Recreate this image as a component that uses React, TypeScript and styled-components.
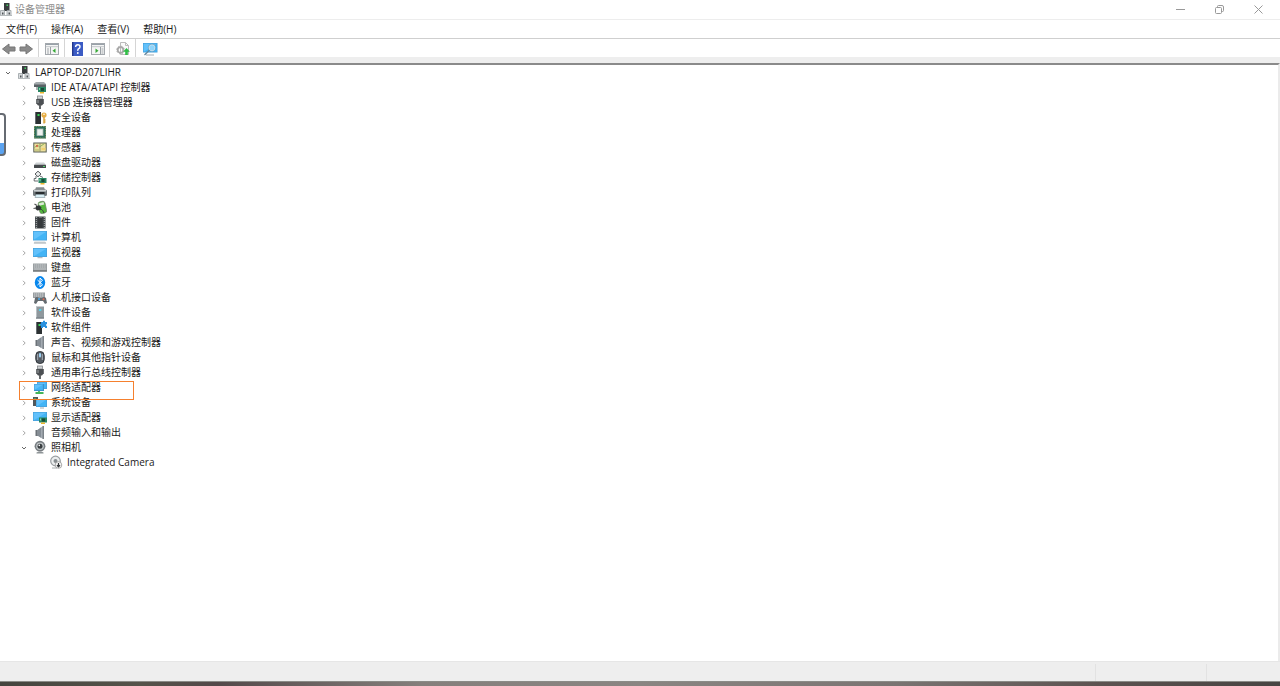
import React, { useState } from "react";
import styled, { createGlobalStyle, css } from "styled-components";

const GlobalStyle = createGlobalStyle`
  *, *::before, *::after { box-sizing: border-box; }
  body {
    margin: 0;
    background: #fff;
    color: #1a1a1a;
    font-family: "Open Sans", "Noto Sans CJK SC", sans-serif;
    font-size: 10px;
    line-height: 15px;
  }
  button { font: inherit; color: inherit; background: none; border: 0; padding: 0; margin: 0; }
`;

const Window = styled.div`
  position: relative;
  display: flex;
  flex-direction: column;
  min-height: 100vh;
  overflow: hidden;
`;

const TitleBar = styled.header`
  display: flex;
  align-items: center;
  height: 20px;
  border-bottom: 1px solid #ededed;
`;

const Title = styled.h1`
  flex: 1;
  margin: 0 0 0 3px;
  font-size: 10px;
  font-weight: 400;
  color: #8c8c8c;
`;

const Caption = styled.button`
  display: flex;
  align-items: center;
  justify-content: center;
  width: 39px;
  height: 19px;
  color: #999;
`;

const CaptionGroup = styled.div`
  display: flex;
  padding-right: 2px;
`;

const MenuBar = styled.nav`
  display: flex;
  align-items: center;
  gap: 14px;
  height: 19px;
  padding: 1px 0 0 6px;
  border-bottom: 1px solid #cfcfcf;
`;

const MenuItem = styled.button`
  height: 15px;
  white-space: nowrap;
`;

const ToolBar = styled.div`
  display: flex;
  align-items: center;
  height: 24px;
  border-bottom: 6px solid #eee;
`;

const ToolButton = styled.button<{ $width?: number }>`
  display: flex;
  align-items: center;
  justify-content: center;
  width: ${(p) => p.$width ?? 21}px;
  height: 18px;
  padding-top: 2px;
`;

const Divider = styled.span`
  width: 1px;
  height: 18px;
  margin: 0 2px;
  background: #d5d5d5;
`;

const TreePane = styled.main`
  flex: 1;
  border-top: 2px solid #8a8a8a;
  border-right: 2px solid #ebebeb;
`;

const List = styled.ul`
  list-style: none;
  margin: 0;
  padding: 0;
`;

const Row = styled.div<{ $depth: number }>`
  position: relative;
  display: flex;
  align-items: center;
  width: max-content;
  height: 15px;
  padding-left: ${(p) => p.$depth * 16}px;
`;

const Toggle = styled.button`
  display: flex;
  align-items: center;
  justify-content: center;
  width: 16px;
  height: 15px;
`;

const Spacer = styled.span`
  width: 16px;
`;

const IconSlot = styled.span`
  display: flex;
  margin: 0 4px 0 1px;
`;

const Label = styled.span`
  white-space: nowrap;
`;

const Mark = styled.span`
  position: absolute;
  z-index: 1;
  top: 1px;
  left: 19px;
  width: 115px;
  height: 19px;
  border: 1px solid #f5802e;
  pointer-events: none;
`;

const EdgeHandle = styled.span`
  position: absolute;
  top: 113px;
  left: -6px;
  width: 12px;
  height: 43px;
  border: 2px solid #666b72;
  border-radius: 4px;
  background: linear-gradient(#fff 0 28px, #5ba3f0 28px);
`;

const StatusBar = styled.footer`
  display: flex;
  height: 20px;
  border-top: 1px solid #e6e6e6;
  background: #eee;
`;

const StatusCell = styled.span<{ $size?: number }>`
  ${(p) =>
    p.$size
      ? css`flex: 0 0 ${p.$size}px; margin-top: 2px; border-left: 1px solid #e2e2e2;`
      : css`flex: 1;`}
`;

const DesktopEdge = styled.div`
  height: 5px;
  border-top: 1px solid #8b8b87;
  background: linear-gradient(90deg, #45443e 0%, #55534a 11%, #54494a 17%, #857f7c 33%, #8a8582 50%, #7a7472 70%, #5c5250 86%, #474442 100%);
`;

/* ---------- drawings ---------- */

const Screen = ({ x, y, w, h }: { x: number; y: number; w: number; h: number }) => (
  <>
    <rect x={x} y={y} width={w} height={h} fill="#4b9fd8" />
    <rect x={x + 0.7} y={y + 0.7} width={w - 1.4} height={h - 1.4} fill="#43b4f5" />
    <path d={`M${x + 0.7} ${y + h - 0.7}L${x + w - 0.7} ${y + 0.7}H${x + 0.7}z`} fill="#62c1fb" />
  </>
);

const Card = ({ x, y }: { x: number; y: number }) => (
  <>
    <rect x={x} y={y} width="8" height="5" fill="#298662" />
    <rect x={x + 3} y={y + 1} width="3" height="3" fill="#174b38" />
    <rect x={x + 1} y={y + 1} width="1" height="2" fill="#8ad2b0" />
    <rect x={x + 2} y={y + 5} width="4" height="1.5" fill="#edb72e" />
  </>
);

const Tower = ({ x, y, h }: { x: number; y: number; h: number }) => (
  <>
    <rect x={x} y={y} width="6" height={h} fill="#2c3133" />
    <rect x={x} y={y} width="1" height={h} fill="#666d70" />
    <rect x={x + 2.5} y={y + 2} width="2" height="2" fill="#37d957" />
  </>
);

const speaker = (
  <>
    <path d="M2.5 5H5v6H2.500z" fill="#6c7278" />
    <path d="M4.5 5L10 1v13l-5.500-3.500z" fill="#a3aab1" />
    <path d="M4.500 5L8 2.500v10.200l-3.500-2.200z" fill="#858d95" />
    <path d="M10.300 1v13" stroke="#6e757c" strokeWidth="1.2" />
  </>
);

const usb = (
  <>
    <rect x="4.5" y="1" width="5" height="3" fill="#d0d3d5" stroke="#83878a" strokeWidth=".8" />
    <path d="M3.2 4h7.6v4.2L9 10.5H5L3.2 8.2z" fill="#4c5053" />
    <path d="M5 5v3" stroke="#9ba0a3" />
    <path d="M7 10v4" stroke="#54585b" strokeWidth="1.8" />
  </>
);

const art: Record<string, React.ReactNode> = {
  root: (
    <>
      <rect x="5" y="1" width="5.5" height="8" fill="#393d3f" />
      <rect x="7.5" y="2.5" width="1.5" height="1.5" fill="#47d063" />
      <path d="M1.5 8.500h4v5h-4zM8 8.500h4v5H8z" fill="#d9dcde" stroke="#9ba1a4" strokeWidth=".8" />
      <path d="M3 10.500h1.500v2H3zM9.500 10.500H11v2H9.500z" fill="#505558" />
      <path d="M1 13.500h12" stroke="#b5babc" />
    </>
  ),
  ide: (
    <>
      <path d="M1 3.500l2-1.500h8l2 2v3H1z" fill="#a4aaad" />
      <path d="M1 4.500h12V7H1z" fill="#5a6266" />
      <path d="M4 7v3" stroke="#5a6064" />
      <Card x={5} y={7} />
    </>
  ),
  usb,
  security: (
    <>
      <Tower x={2} y={2} h={12} />
      <circle cx="11" cy="5" r="2.600" fill="#e7ae45" />
      <circle cx="11" cy="4.300" r=".8" fill="#fff" />
      <path d="M11 7v6.500M11 10h1.500M11 12h1.500" stroke="#dba23c" strokeWidth="1.5" />
    </>
  ),
  cpu: (
    <>
      <rect x="1" y="1" width="12" height="12.500" fill="#2d6d58" />
      <rect x="1.500" y="1.500" width="11" height="11.500" fill="none" stroke="#a3a366" strokeDasharray=".7 1" />
      <rect x="4" y="4" width="6" height="6.500" fill="#edf1ef" stroke="#a9bab2" strokeWidth=".8" />
    </>
  ),
  sensor: (
    <>
      <rect x=".8" y="3" width="12.400" height="9" fill="#ecdf9a" stroke="#596058" />
      <path d="M1.500 7.500l3-2.500 2 2 5-3.500" stroke="#8cb35e" fill="none" />
      <path d="M7 3v9" stroke="#8f9670" />
      <path d="M8.500 8h4v2h-4z" fill="#f0d070" />
      <circle cx="4" cy="6" r="1" fill="#d95040" />
      <path d="M2 10h4" stroke="#a8b66e" />
    </>
  ),
  disk: (
    <>
      <path d="M3 7.500h8l2 2.500H1z" fill="#cfd3d5" />
      <rect x="1" y="9.700" width="12" height="3.300" rx=".6" fill="#45494c" />
      <rect x="10" y="11" width="2" height="1" fill="#54d56b" />
    </>
  ),
  storage: (
    <>
      <path d="M5 1.200L8 4 5 6.800 2 4z" fill="#eceeef" stroke="#575c5f" />
      <path d="M3 6v2.500M3 8.500H1.200V11H5M7 6l3 1.500" stroke="#666b6e" fill="none" />
      <Card x={5.5} y={8} />
    </>
  ),
  printer: (
    <>
      <path d="M3 2.300h8l1 2.500H2z" fill="#858b8e" />
      <rect x="0" y="4.500" width="14" height="6.500" rx="1.500" fill="#737a7e" />
      <rect x="1" y="5" width="12" height="1.500" fill="#c8cdcf" />
      <rect x="2.500" y="7" width="9" height="2.500" fill="#272c2f" />
      <path d="M3 9.500h8l1 3H2z" fill="#d8eef5" stroke="#84959c" strokeWidth=".6" />
    </>
  ),
  battery: (
    <>
      <rect x="6" y="1.500" width="7" height="12" rx="2.400" transform="rotate(-12 9 8)" fill="#54b73e" stroke="#6e8267" strokeWidth=".7" />
      <path d="M5.700 3.200l4.800-1.200.8 2.500-4.900 1.200z" fill="#dfe9da" />
      <path d="M1.500 4l2.500 1.500M.5 8.500L3 8" stroke="#555" strokeWidth="1.200" />
      <path d="M3 6l3.200-.7L8.500 7.500 7.500 10l-3.300.6L2.500 9z" fill="#303437" />
      <path d="M7.500 9c2 .5 2.500 2 3.500 4" fill="none" stroke="#303437" />
    </>
  ),
  firmware: (
    <>
      <rect x="2" y="1.500" width="10.500" height="12" fill="#43484b" />
      <path d="M3.300 2v11.500M11.300 2v11.500" stroke="#b4b8ba" strokeDasharray="1 1" />
      <rect x="5" y="2" width="4.500" height="11" fill="#35393c" />
      <path d="M6 2h3" stroke="#999ea1" />
    </>
  ),
  computer: (
    <>
      <Screen x={0} y={1} w={14} h={9.5} />
      <path d="M1.500 11.500H12l1.500 2H.5z" fill="#d2d8db" />
      <path d="M1 13h12" stroke="#a4adb1" strokeWidth=".8" />
    </>
  ),
  monitor: (
    <>
      <Screen x={0} y={3} w={14} h={9} />
      <path d="M4.500 12.700h5" stroke="#a3abb0" />
    </>
  ),
  keyboard: (
    <>
      <rect x="0" y="3.500" width="14" height="8" fill="#9a9fa2" />
      <path d="M1 5h12M1 7h12" stroke="#c9cdcf" strokeDasharray="1.400 .5" />
      <path d="M1 9h12" stroke="#c4c8ca" />
      <path d="M0 11h14" stroke="#5b6063" />
    </>
  ),
  bluetooth: (
    <>
      <ellipse cx="7" cy="7.500" rx="5.200" ry="6.500" fill="#0787ed" />
      <path d="M4.500 5l5 4.800L7 12V3l2.500 2.300-5 4.700" fill="none" stroke="#fff" />
    </>
  ),
  hid: (
    <>
      <rect x="0" y="2.500" width="12" height="5.500" fill="#989da0" />
      <path d="M1 4h10M1 6h10" stroke="#d0d3d5" strokeDasharray="1.300 .7" />
      <path d="M1 13l1-5q2-2 4 0h3q2-2 4 0l1 5-2 1-2-3H5l-2 3z" fill="#646b70" />
      <circle cx="6" cy="9" r="1" fill="#47a8e8" />
      <circle cx="10.500" cy="9.300" r="1" fill="#df6a55" />
    </>
  ),
  softdev: (
    <>
      <rect x="3" y="1.500" width="8" height="12" fill="#8f989d" />
      <path d="M3.500 1.500v12" stroke="#b9c0c4" />
      <rect x="6" y="4" width="2.300" height="2" fill="#55d0e8" />
      <path d="M3 13h8" stroke="#6f777c" />
    </>
  ),
  component: (
    <>
      <Tower x={3} y={2} h={12} />
      <path d="M8 2h2V.8h2V2h2v2.200h-1v1.600h1V8h-2V7h-2v1H8V5.500H7V3.800h1z" fill="#2b91df" />
    </>
  ),
  sound: speaker,
  mouse: (
    <>
      <rect x="2.800" y="1.500" width="8.400" height="12" rx="4" fill="#555c64" stroke="#30353a" />
      <path d="M4.700 4v6M9.300 4v6" stroke="#a9b1b8" />
      <rect x="6" y="3" width="2" height="4.500" rx="1" fill="#9fd3f5" />
    </>
  ),
  network: (
    <>
      <Screen x={4} y={2} w={10} h={7} />
      <rect x="1" y="4" width="10" height="7" fill="#2f82c4" />
      <Screen x={1} y={4} w={9.5} h={6.5} />
      <path d="M6 11v2M2.500 13h8" stroke="#45b55a" strokeWidth="1.800" />
    </>
  ),
  system: (
    <>
      <rect x="0" y="2" width="5" height="9" fill="#50575b" />
      <path d="M1 4h2" stroke="#4cda68" />
      <Screen x={3} y={4} w={11} h={8} />
      <path d="M7 13h4" stroke="#a3abb0" />
    </>
  ),
  display: (
    <>
      <Screen x={0} y={2} w={14} h={9} />
      <Card x={6} y={7.5} />
    </>
  ),
  camera: (
    <>
      <circle cx="7" cy="6.200" r="5.400" fill="#777d81" />
      <circle cx="7" cy="6.200" r="3.800" fill="#c1c6c8" />
      <circle cx="7" cy="6.200" r="2.500" fill="#383d40" />
      <circle cx="6.300" cy="5.400" r=".8" fill="#fff" />
      <path d="M3.500 12.500q3.500-2 7 0v1h-7z" fill="#8d9396" />
    </>
  ),
  integrated: (
    <>
      <circle cx="6.500" cy="6" r="4.800" fill="#eceeef" stroke="#999ea1" strokeWidth="1.200" />
      <circle cx="6.500" cy="6" r="2" fill="#878d90" />
      <path d="M3 13h5" stroke="#a6abad" />
      <circle cx="9.500" cy="10" r="3.300" fill="#f7f7f7" stroke="#888" strokeWidth=".7" />
      <path d="M9.500 8v3.400M8 10.200l1.500 1.600 1.500-1.600" fill="none" stroke="#303437" strokeWidth="1.200" />
    </>
  ),
};

const DeviceIcon = ({ name }: { name: string }) => (
  <svg width="14" height="15" viewBox="0 0 14 15" aria-hidden="true">{art[name]}</svg>
);

const Chevron = ({ open }: { open: boolean }) => (
  <svg width="6" height="6" viewBox="0 0 6 6" fill="none" stroke={open ? "#555" : "#999"} strokeWidth=".9" aria-hidden="true">
    <path d={open ? "M1 2l2 2 2-2" : "M2 .8L4.200 3 2 5.200"} />
  </svg>
);

const Arrow = ({ right }: { right?: boolean }) => (
  <svg width="15" height="14" viewBox="0 0 15 14" aria-hidden="true">
    <path
      d={right ? "M1 5h6V2l6.500 5L7 12V9H1z" : "M14 5H8V2L1.500 7 8 12V9h6z"}
      fill="#8b8b8b" stroke="#777" strokeLinejoin="round"
    />
  </svg>
);

const PanelIcon = ({ right }: { right?: boolean }) => (
  <svg width="14" height="12" viewBox="0 0 14 12" aria-hidden="true">
    <rect x=".5" y=".5" width="13" height="11" fill="#f5f5f5" stroke="#a3a8ad" />
    <path d="M1 1.500h12" stroke="#98a1a9" />
    <path d="M1 3.700h12" stroke="#c2c7cb" />
    {right ? (
      <><path d="M9.500 4v7.500" stroke="#9aa0a5" /><path d="M10.500 6h2M10.500 8h2M10.500 10h2" stroke="#8a9298" strokeWidth=".8" /><path d="M4.500 5.500v4.600l3-2.300z" fill="#35a936" /></>
    ) : (
      <><path d="M5.500 4v7.500" stroke="#9aa0a5" /><path d="M2 6h2M2 8h2M2 10h2" stroke="#8a9298" strokeWidth=".8" /><path d="M10.500 5.500v4.600l-3-2.300z" fill="#35a936" /></>
    )}
  </svg>
);

const HelpIcon = () => (
  <svg width="11" height="14" viewBox="0 0 11 14" aria-hidden="true">
    <rect width="11" height="14" fill="#3b5bc4" />
    <path d="M.7 0v14" stroke="#24388d" strokeWidth="1.400" />
    <path d="M3.600 5q0-2.200 2.200-2.200T8 4.800q0 1.300-1.200 1.900T5.800 8.800" fill="none" stroke="#fff" strokeWidth="1.400" />
    <circle cx="5.800" cy="11" r=".9" fill="#fff" />
  </svg>
);

const UpdateIcon = () => (
  <svg width="14" height="14" viewBox="0 0 14 14" aria-hidden="true">
    <path d="M4.500.5h5l3 3v9h-8z" fill="#fafafa" stroke="#bbb" />
    <path d="M9.500.5v3h3" fill="none" stroke="#bbb" />
    <circle cx="4.500" cy="8" r="2.800" fill="none" stroke="#a8a8a8" strokeWidth="1.800" />
    <circle cx="4.500" cy="8" r="3.800" fill="none" stroke="#a8a8a8" strokeDasharray="1.400 1.600" />
    <path d="M10.500 6l3.300 3.800h-2V13H9.200V9.800h-2z" fill="#2fbd45" />
  </svg>
);

const ScanIcon = () => (
  <svg width="15" height="13" viewBox="0 0 15 13" aria-hidden="true">
    <Screen x={0} y={0} w={14.5} h={9.5} />
    <path d="M3 12h8" stroke="#a2abb1" />
    <circle cx="9" cy="4.800" r="3.200" fill="#8fd4fb" stroke="#dceef8" />
    <circle cx="9" cy="4.800" r="3.700" fill="none" stroke="#6393b0" strokeWidth=".6" />
    <path d="M6.400 7.200L1.500 12" stroke="#63879e" strokeWidth="1.300" />
  </svg>
);

/* ---------- data ---------- */

interface Device {
  icon: string;
  label: string;
  marked?: boolean;
  open?: boolean;
  children?: Device[];
}

const menus = ["文件(F)", "操作(A)", "查看(V)", "帮助(H)"];

const computer: Device = {
  icon: "root",
  label: "LAPTOP-D207LIHR",
  open: true,
  children: [
    { icon: "ide", label: "IDE ATA/ATAPI 控制器" },
    { icon: "usb", label: "USB 连接器管理器" },
    { icon: "security", label: "安全设备" },
    { icon: "cpu", label: "处理器" },
    { icon: "sensor", label: "传感器" },
    { icon: "disk", label: "磁盘驱动器" },
    { icon: "storage", label: "存储控制器" },
    { icon: "printer", label: "打印队列" },
    { icon: "battery", label: "电池" },
    { icon: "firmware", label: "固件" },
    { icon: "computer", label: "计算机" },
    { icon: "monitor", label: "监视器" },
    { icon: "keyboard", label: "键盘" },
    { icon: "bluetooth", label: "蓝牙" },
    { icon: "hid", label: "人机接口设备" },
    { icon: "softdev", label: "软件设备" },
    { icon: "component", label: "软件组件" },
    { icon: "sound", label: "声音、视频和游戏控制器" },
    { icon: "mouse", label: "鼠标和其他指针设备" },
    { icon: "usb", label: "通用串行总线控制器" },
    { icon: "network", label: "网络适配器", marked: true },
    { icon: "system", label: "系统设备" },
    { icon: "display", label: "显示适配器" },
    { icon: "sound", label: "音频输入和输出" },
    { icon: "camera", label: "照相机", open: true, children: [{ icon: "integrated", label: "Integrated Camera" }] },
  ],
};

const TreeNode = ({ device, depth }: { device: Device; depth: number }) => {
  const [open, setOpen] = useState(Boolean(device.open));
  const leaf = depth === 2;
  return (
    <li>
      <Row $depth={depth}>
        {leaf ? (
          <Spacer />
        ) : (
          <Toggle aria-label={device.label} aria-expanded={open} onClick={() => setOpen(!open)}>
            <Chevron open={open} />
          </Toggle>
        )}
        <IconSlot><DeviceIcon name={device.icon} /></IconSlot>
        <Label>{device.label}</Label>
        {device.marked && <Mark />}
      </Row>
      {open && device.children && (
        <List>
          {device.children.map((child) => (
            <TreeNode key={child.label} device={child} depth={depth + 1} />
          ))}
        </List>
      )}
    </li>
  );
};

export default function App() {
  return (
    <Window>
      <GlobalStyle />
      <TitleBar>
        <svg width="12" height="15" viewBox="1 0 12 15" aria-hidden="true">{art.root}</svg>
        <Title>设备管理器</Title>
        <CaptionGroup>
          <Caption aria-label="最小化">
            <svg width="9" height="9" viewBox="0 0 9 9" stroke="currentColor"><path d="M0 4.500h9" /></svg>
          </Caption>
          <Caption aria-label="还原">
            <svg width="9" height="9" viewBox="0 0 9 9" fill="none" stroke="currentColor">
              <rect x=".5" y="2.500" width="6" height="6" rx="1" />
              <path d="M2.500 2.500v-1q0-1 1-1H7Q8.500.5 8.500 2v3.500q0 1-1 1h-1" />
            </svg>
          </Caption>
          <Caption aria-label="关闭">
            <svg width="9" height="9" viewBox="0 0 9 9" stroke="currentColor"><path d="M.5.5l8 8M8.500.5l-8 8" /></svg>
          </Caption>
        </CaptionGroup>
      </TitleBar>
      <MenuBar>
        {menus.map((m) => <MenuItem key={m}>{m}</MenuItem>)}
      </MenuBar>
      <ToolBar>
        <ToolButton $width={17} aria-label="后退"><Arrow /></ToolButton>
        <ToolButton $width={19} aria-label="前进"><Arrow right /></ToolButton>
        <Divider />
        <ToolButton aria-label="显示控制台树"><PanelIcon /></ToolButton>
        <Divider />
        <ToolButton aria-label="帮助"><HelpIcon /></ToolButton>
        <ToolButton $width={19} aria-label="操作窗格"><PanelIcon right /></ToolButton>
        <Divider />
        <ToolButton aria-label="更新驱动程序"><UpdateIcon /></ToolButton>
        <Divider />
        <ToolButton $width={24} aria-label="扫描硬件改动"><ScanIcon /></ToolButton>
      </ToolBar>
      <TreePane>
        <List>
          <TreeNode device={computer} depth={0} />
        </List>
      </TreePane>
      <StatusBar>
        <StatusCell />
        <StatusCell $size={111} />
        <StatusCell $size={74} />
      </StatusBar>
      <DesktopEdge />
      <EdgeHandle />
    </Window>
  );
}
